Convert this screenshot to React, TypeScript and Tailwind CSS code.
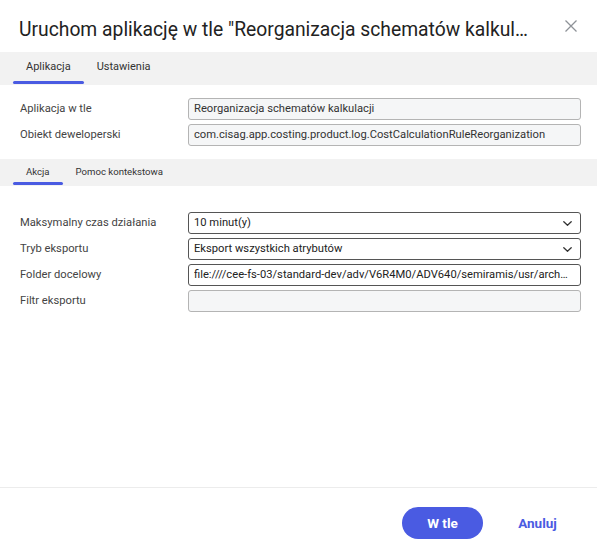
import React from "react";

const font = { fontFamily: "Roboto, 'Noto Sans', Arial, sans-serif" };

function Chevron() {
  return (
    <svg width="9" height="5" viewBox="0 0 9 5" className="shrink-0">
      <path d="M0.8 0.8 L4.5 4.2 L8.2 0.8" fill="none" stroke="#333" strokeWidth="1.3" strokeLinecap="round" strokeLinejoin="round" />
    </svg>
  );
}

function Row({ label, value, variant, select }: { label: string; value: string; variant: "ro" | "edit"; select?: boolean }) {
  return (
    <div className="flex items-center h-[22px]">
      <div className="w-[168px] shrink-0 text-[11.2px] text-[#444] leading-none">{label}</div>
      <div
        className={
          "flex-1 min-w-0 h-[22px] rounded-[3px] border flex items-center pl-[5px] text-[11.2px] leading-none " +
          (select ? "pr-[8px] " : "pr-[10px] ") +
          (variant === "ro" ? "bg-[#f5f6f7] border-[#b4b4b4] text-[#333]" : "bg-white border-[#555] text-[#222]")
        }
      >
        <span className="flex-1 min-w-0 truncate">{value}</span>
        {select && <Chevron />}
      </div>
    </div>
  );
}

export default function App() {
  return (
    <div className="w-[597px] h-[555px] bg-white flex flex-col" style={font}>
      <div className="h-[52px] shrink-0 flex items-center pl-[19px] pr-[20px]">
        <div className="w-[512px] truncate text-[19.3px] text-[#222] leading-none pt-[9px] pb-[2px]">
          Uruchom aplikację w tle "Reorganizacja schematów kalkulacji"
        </div>
        <div className="flex-1" />
        <svg width="12" height="12" viewBox="0 0 12 12">
          <path d="M0.5 0.5 L11.5 11.5 M11.5 0.5 L0.5 11.5" stroke="#8e9298" strokeWidth="1.3" />
        </svg>
      </div>

      <div className="h-[33px] shrink-0 bg-[#f2f2f2] flex pl-[13px]">
        <div className="relative px-[13px] flex items-center text-[11px] text-[#333] pb-[2px]">
          Aplikacja
          <div className="absolute left-0 right-0 bottom-[1px] h-[3px] rounded-full bg-[#4a5be2]" />
        </div>
        <div className="px-[13px] flex items-center text-[11px] text-[#333] pb-[2px]">Ustawienia</div>
      </div>

      <div className="pt-[13px] pl-[20px] pr-[16px] flex flex-col gap-[4px]">
        <Row label="Aplikacja w tle" value="Reorganizacja schematów kalkulacji" variant="ro" />
        <Row label="Obiekt deweloperski" value="com.cisag.app.costing.product.log.CostCalculationRuleReorganization" variant="ro" />
      </div>

      <div className="mt-[13px] h-[27px] shrink-0 bg-[#f2f2f2] flex pl-[13px]">
        <div className="relative px-[13px] flex items-center text-[9.6px] text-[#333] pb-[1px]">
          Akcja
          <div className="absolute left-0 right-0 bottom-[1px] h-[3px] rounded-full bg-[#4a5be2]" />
        </div>
        <div className="px-[13px] flex items-center text-[9.6px] text-[#333] pb-[1px]">Pomoc kontekstowa</div>
      </div>

      <div className="pt-[26px] pl-[20px] pr-[16px] flex flex-col gap-[4px]">
        <Row label="Maksymalny czas działania" value="10 minut(y)" variant="edit" select />
        <Row label="Tryb eksportu" value="Eksport wszystkich atrybutów" variant="edit" select />
        <Row label="Folder docelowy" value="file:////cee-fs-03/standard-dev/adv/V6R4M0/ADV640/semiramis/usr/archive/export" variant="edit" />
        <Row label="Filtr eksportu" value="" variant="ro" />
      </div>

      <div className="flex-1" />

      <div className="h-[68px] shrink-0 border-t border-[#ececec] flex justify-end items-start pt-[19px] pr-[19px] gap-[14px]">
        <button className="w-[81px] h-[32px] rounded-full bg-[#4a5be2] text-white text-[13.5px] font-bold">W tle</button>
        <button className="w-[81px] h-[32px] rounded-full text-[#4a5be2] text-[13.5px] font-bold">Anuluj</button>
      </div>
    </div>
  );
}
